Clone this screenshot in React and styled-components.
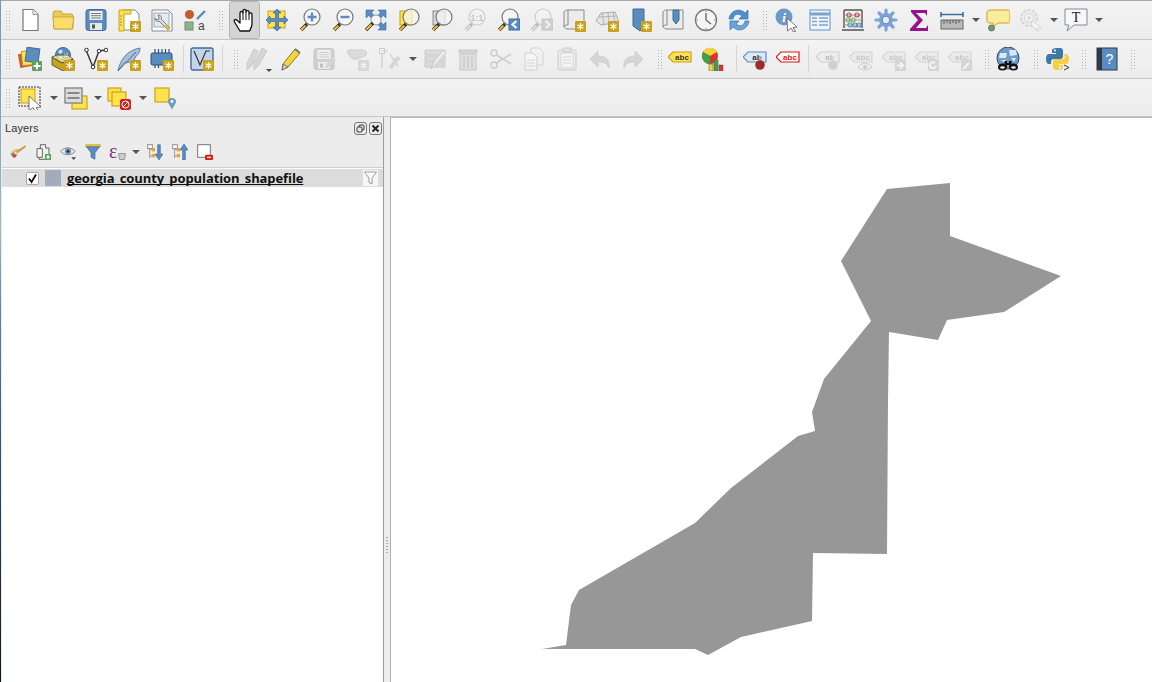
import React from "react";
import styled, { createGlobalStyle } from "styled-components";

const Global = createGlobalStyle`
  html, body { margin: 0; padding: 0; background: #ececec; overflow: hidden; }
  body { font-family: "Liberation Sans", Arial, sans-serif; }
`;

const Window = styled.div`
  width: 1152px;
  height: 682px;
  display: flex;
  flex-direction: column;
  overflow: hidden;
  border-left: 1px solid;
  border-image: linear-gradient(#6f98c4 0%, #7da1c6 15%, #a2b6c8 34%, #5b87b2 45%, #2a4a70 70%, #0c1420 100%) 1;
  box-sizing: border-box;
`;

const Toolbars = styled.div`
  flex: none;
  border-top: 1px solid #a8a8a8;
  background: #f0f0f0;
`;

const Toolbar = styled.div`
  height: ${p => p.$h || 38}px;
  box-sizing: content-box;
  display: flex;
  align-items: center;
  padding-left: 4px;
  border-bottom: 1px solid #c6c6c6;
  background: linear-gradient(#f3f3f3, #ececec);
`;

const Grip = styled.span`
  flex: none;
  width: 6px;
  height: 20px;
  margin-left: ${p => p.$ml || 0}px;
  margin-right: ${p => p.$mr ?? 3}px;
  background-image: radial-gradient(circle, #b4b4b4 0.8px, transparent 1px);
  background-size: 3px 3px;
`;

const Separator = styled.span`
  flex: none;
  width: 1px;
  height: 28px;
  margin-left: ${p => p.$ml || 0}px;
  margin-right: ${p => p.$mr || 0}px;
  background: #d6d6d6;
`;

const Tool = styled.span`
  flex: none;
  width: 33px;
  height: 24px;
  padding-left: 4px;
  box-sizing: border-box;
  display: block;
  ${p => p.$off && "filter: grayscale(1) opacity(0.3);"}
  svg { display: block; }
`;

const ActiveTool = styled(Tool)`
  position: relative;
  z-index: 0;
  &::before {
    content: "";
    position: absolute;
    z-index: -1;
    left: 1px;
    right: 1px;
    top: -7px;
    bottom: -7px;
    background: #d4d4d4;
    border: 1px solid #b4b4b4;
    border-radius: 3px;
    box-sizing: border-box;
  }
`;

const MenuTool = styled.span`
  flex: none;
  position: relative;
  &::after {
    content: "";
    position: absolute;
    left: 24px;
    bottom: -1px;
    border-left: 3px solid transparent;
    border-right: 3px solid transparent;
    border-top: 3px solid #444;
  }
`;

const Caret = styled.span`
  flex: none;
  width: ${p => p.$w || 13}px;
  display: flex;
  justify-content: center;
  &::after {
    content: "";
    border-left: 4px solid transparent;
    border-right: 4px solid transparent;
    border-top: 4px solid #555;
  }
`;

const Body = styled.div`
  flex: 1;
  min-height: 0;
  display: flex;
`;

const Dock = styled.div`
  flex: none;
  width: 382px;
  display: flex;
  flex-direction: column;
  background: #ececec;
  border-right: 1px solid #9e9e9e;
`;

const DockTitle = styled.div`
  height: 22px;
  display: flex;
  align-items: center;
  justify-content: space-between;
  padding: 0 1px 0 4px;
  font-size: 11px;
  letter-spacing: 0.1px;
  color: #333;
`;

const TitleButtons = styled.div`
  display: flex;
  gap: 2px;
`;

const LayerBar = styled.div`
  height: 28px;
  box-sizing: border-box;
  padding: 0 0 2px 4px;
  display: flex;
  align-items: center;
`;

const LayerTool = styled.span`
  flex: none;
  width: 25px;
  display: flex;
  justify-content: center;
  svg { display: block; }
`;

const EpsilonMark = styled.span`
  position: relative;
  width: 17px;
  height: 16px;
  font: 20px/14px "Liberation Serif", serif;
  color: #80307f;
  svg {
    position: absolute;
    right: 0;
    bottom: 0;
  }
`;

const Tree = styled.div`
  flex: 1;
  background: #fff;
  border-top: 1px solid #d0d0d0;
  margin-left: 1px;
  padding-top: 1px;
`;

const LayerRow = styled.div`
  height: 18px;
  display: flex;
  align-items: center;
  background: #dcdcdc;
  padding-left: 24px;
  position: relative;
`;

const Check = styled.span`
  width: 13px;
  height: 13px;
  box-sizing: border-box;
  border: 1px solid #aaa;
  border-radius: 2px;
  background: #fff;
  display: flex;
  align-items: center;
  justify-content: center;
  svg { display: block; }
`;

const Swatch = styled.span`
  width: 16px;
  height: 16px;
  margin-left: 6px;
  background: #a1adbd;
`;

const LayerName = styled.span`
  margin-left: 6px;
  font: bold 13px "Open Sans", sans-serif;
  letter-spacing: -0.09px;
  color: #111;
  text-decoration: underline;
  text-decoration-skip-ink: none;
`;

const FilterMark = styled.span`
  position: absolute;
  right: 5px;
  top: 1px;
  width: 15px;
  height: 16px;
  background: #f6f6f6;
  display: flex;
  align-items: center;
  justify-content: center;
`;

const Splitter = styled.div`
  flex: none;
  width: 6px;
  display: flex;
  align-items: center;
  justify-content: center;
  background: #ececec;
  border-right: 1px solid #b0b0b0;
  &::after {
    content: "";
    width: 2px;
    height: 17px;
    margin-top: 290px;
    background-image: radial-gradient(circle, #aaa 0.8px, transparent 1px);
    background-size: 2px 3px;
  }
`;

const MapCanvas = styled.div`
  flex: 1;
  background: #fff;
  border-top: 1px solid #b8b8b8;
  svg { display: block; }
`;

const GOLD = "#c9a21a";
const BLUE = "#5a8cc0";
const LINE = "#3e6c9c";
const YEL = "#ffe34d";
const SANS = "Liberation Sans, sans-serif";
const SERIF = "Liberation Serif, serif";

const Ic = ({ children, size = 24 }) => (
  <svg width={size} height={size} viewBox="0 0 24 24" fill="none">
    {children}
  </svg>
);

const Badge = () => (
  <g>
    <rect x="13" y="13" width="11" height="11" rx="1" fill={GOLD} />
    <path d="M18.5 15v7M15.5 16.7l6 3.6M21.5 16.7l-6 3.6" stroke="#fff" strokeWidth="1.3" />
  </g>
);

const Glass = ({ children, fill = "#f6f6f6" }) => (
  <>
    <circle cx="14" cy="9" r="8" fill={fill} stroke="#777" strokeWidth="1.2" />
    {children}
    <path d="M3 22l6-6" stroke="#333" strokeWidth="3.4" />
    <path d="M2.8 22.2l4.6-4.6" stroke="#f2c230" strokeWidth="2" />
  </>
);

const Tag = ({ fill = YEL, stroke = GOLD, label = "abc", color = "#333" }) => (
  <>
    <path d="M0 10l5-5h18v10H5z" fill={fill} stroke={stroke} strokeWidth="1.2" />
    <text x="14" y="13" fontSize="8" fontWeight="bold" fontFamily={SANS} textAnchor="middle" fill={color}>
      {label}
    </text>
  </>
);

const NewFile = () => (
  <Ic>
    <path d="M5 1.5h10l5 5v16H5z" fill="#fff" stroke="#777" strokeWidth="1.2" />
    <path d="M15 1.5v5h5" fill="#eee" stroke="#999" />
  </Ic>
);
const OpenFolder = () => (
  <Ic>
    <path d="M2 6l1-3h7l2 3h9l1 2v13H3z" fill="#e8c95a" stroke="#cba83a" />
    <path d="M2 9h21l-2 12H3z" fill="#fbdc6b" stroke="#cba83a" />
  </Ic>
);
const Save = ({ pen }) => (
  <Ic>
    <rect x="2" y="1.5" width="20" height="21" rx="2.5" fill={BLUE} stroke={LINE} />
    <rect x="5.5" y="3" width="13" height="9" fill="#f1f1f1" />
    <path d="M7 5.5h10M7 7.7h10M7 10h10" stroke="#777" />
    <rect x="6" y="15" width="12" height="7" fill="#e8e8e8" />
    <rect x="8" y="16.5" width="3" height="4" fill="#555" />
    {pen && <path d="M13 22l2-6 6-6 3 3-6 6z" fill="#999" />}
  </Ic>
);
const Templates = () => (
  <Ic>
    <path d="M5 2h13l4 4v16H5z" fill="#fff" stroke="#888" />
    <path d="M2 2h12v4H7v17H2z" fill={YEL} stroke={GOLD} />
    <path d="M3 8h2M3 11h2M3 14h2M3 17h2" stroke="#a88" />
    <Badge />
  </Ic>
);
const LayoutManager = () => (
  <Ic>
    <path d="M2 2h16l4 4v17H2z" fill="#fff" stroke="#888" />
    <rect x="4" y="5" width="15" height="14" fill="#e3e9f3" stroke="#9ab" />
    <path d="M8 7c3 0 4 2 3 4l9 9-2 2-9-9c-2 1-4 0-4-3l2 2 2-1v-2z" fill="#ddd" stroke="#666" strokeWidth=".8" />
    <path d="M15 17l4 4" stroke="#e8c030" strokeWidth="2.5" />
  </Ic>
);
const StyleManager = () => (
  <Ic>
    <circle cx="6.5" cy="6.5" r="4.5" fill="#c85a2c" />
    <path d="M14 11l8-8" stroke={BLUE} strokeWidth="2.4" />
    <rect x="2" y="14" width="8" height="8" fill="#8db48f" stroke="#6c8f70" />
    <text x="15" y="22" fontSize="12" fontFamily={SANS} fill="#444">a</text>
  </Ic>
);
const HandIcon = () => (
  <Ic>
    <path
      d="M8 23L2.5 14c-1.2-2 .8-3.2 2.2-2L8 15V5c0-2 2.8-2 3 0V2.8c0-2 3-2 3 0V4c.2-1.8 3-1.8 3 .3V6c.2-1.7 3-1.5 3 .3V16c0 3-1.5 5-2.5 7z"
      fill="#fff"
      stroke="#111"
      strokeWidth="1.3"
      strokeLinejoin="round"
    />
    <path d="M11 5v7M14 4v8M17 6v6" stroke="#111" strokeWidth="1" />
  </Ic>
);
const PanSelect = () => (
  <Ic>
    <rect x="3" y="3" width="17" height="17" fill={YEL} stroke={GOLD} />
    <path
      d="M12 1l4 4h-2.5v5.5H19V8l4 4-4 4v-2.5h-5.5V19H16l-4 4-4-4h2.5v-5.5H5V16l-4-4 4-4v2.5h5.5V5H8z"
      fill={BLUE}
      stroke={LINE}
      strokeWidth=".7"
    />
  </Ic>
);
const ZoomIn = () => (
  <Ic>
    <Glass>
      <path d="M14 4.5v9M9.5 9h9" stroke={BLUE} strokeWidth="2.4" />
    </Glass>
  </Ic>
);
const ZoomOut = () => (
  <Ic>
    <Glass>
      <path d="M9.5 9h9" stroke={BLUE} strokeWidth="2.4" />
    </Glass>
  </Ic>
);
const ZoomFull = () => (
  <Ic>
    <path d="M2 2h20v20H2z" fill="#e9eef4" />
    <path
      d="M2 2h8L7.5 4.5 10.5 8 8 10.5l-3.5-3L2 10zM22 2v8l-2.5-2.5-3.5 3L13.500 8l3-3.5L14 2zM22 22h-8l2.5-2.5-3-3.5 2.5-2.5 3.5 3L22 14z"
      fill={BLUE}
      stroke={LINE}
      strokeWidth=".6"
    />
    <circle cx="12" cy="12" r="5" fill="#f6f6f6" stroke="#999" />
    <path d="M2 22l7-7" stroke="#333" strokeWidth="3.4" />
    <path d="M2.5 21.5l5-5" stroke="#f2c230" strokeWidth="2" />
  </Ic>
);
const ZoomSelection = () => (
  <Ic>
    <rect x="3" y="3" width="12" height="14" fill={YEL} stroke={GOLD} />
    <Glass fill="rgba(245,245,240,.75)" />
  </Ic>
);
const ZoomLayer = () => (
  <Ic>
    <rect x="3" y="3" width="12" height="14" fill="#d8d8d8" stroke="#888" />
    <Glass fill="rgba(245,245,245,.75)" />
  </Ic>
);
const ZoomNative = () => (
  <Ic>
    <Glass>
      <text x="14" y="12.5" fontSize="9" fontWeight="bold" textAnchor="middle" fontFamily={SANS} fill="#555">1:1</text>
    </Glass>
  </Ic>
);
const ZoomLast = ({ next }) => (
  <Ic>
    <Glass />
    <rect x="13" y="11" width="11" height="11" fill={BLUE} stroke={LINE} />
    <path d={next ? "M16.5 13l4 3.5-4 3.5" : "M20.5 13l-4 3.5 4 3.5"} stroke="#fff" strokeWidth="2" />
  </Ic>
);
const Scroll = ({ children }) => (
  <>
    <path d="M6 2h16v19H6c-2 0-4-1-4-3V4c0-1 2-2 4-2z" fill="#ececec" stroke="#888" />
    <path d="M6 2v15c-2 0-4 .5-4 2" stroke="#888" />
    {children}
  </>
);
const NewMapView = () => (
  <Ic>
    <Scroll />
    <Badge />
  </Ic>
);
const New3d = () => (
  <Ic>
    <path d="M6 5l14-1 4 10-18 3-5-4z" fill="#e4e4e4" stroke="#aaa" />
    <path d="M4 9l18-1M7 5l2 12M13 4l1 12M18 4l2 11" stroke="#aaa" strokeWidth=".8" />
    <Badge />
  </Ic>
);
const Bookmark = () => (
  <Ic>
    <path d="M5 1h11v17l-4 5-7-5z" fill={BLUE} stroke={LINE} />
    <Badge />
  </Ic>
);
const ShowBookmarks = () => (
  <Ic>
    <Scroll>
      <path d="M12 2h6v10l-3 4-3-4z" fill={BLUE} stroke={LINE} />
    </Scroll>
  </Ic>
);
const Clock = () => (
  <Ic>
    <circle cx="12" cy="12" r="10.5" fill="#f4f4f4" stroke="#777" strokeWidth="1.3" />
    <path d="M12 5v7l5 4" stroke="#667" strokeWidth="1.4" />
    <path d="M12 2.5V4M12 20v1.5M2.5 12H4M20 12h1.5" stroke={BLUE} />
  </Ic>
);
const Refresh = () => (
  <Ic>
    <path d="M2 11C3 3 12-1 18 5l3-3v9h-9l3-3c-4-3-8-2-9 3z" fill="#4f8fd0" stroke="#3474b0" strokeWidth=".7" />
    <path d="M22 13c-1 8-10 12-16 6l-3 3v-9h9l-3 3c4 3 8 2 9-3z" fill="#6aa4dc" stroke="#3474b0" strokeWidth=".7" />
  </Ic>
);
const Identify = () => (
  <Ic>
    <circle cx="9" cy="9" r="8.5" fill="#6d9ac9" />
    <text x="9" y="14" fontSize="13" fontWeight="bold" fontStyle="italic" textAnchor="middle" fontFamily={SERIF} fill="#fff">i</text>
    <path d="M12 10l10 9-4 .5 2.5 4-2 .5-2.5-4-3.5 3z" fill="#fff" stroke="#555" strokeWidth=".8" />
  </Ic>
);
const AttrTable = () => (
  <Ic>
    <rect x="2" y="2" width="20" height="20" fill="#f0f4fa" stroke="#7aa3cf" strokeWidth="1.2" />
    <path d="M2 6h20" stroke="#7aa3cf" strokeWidth="3" />
    <path d="M4 10h5M11 10h9M4 13.5h5M11 13.5h9M4 17h5M11 17h9" stroke="#7aa3cf" strokeWidth="1.4" />
  </Ic>
);
const Abacus = () => (
  <Ic>
    <path d="M3 2v18M21 2v18M3 2h18M1 22h22" stroke="#555" strokeWidth="1.4" />
    <path d="M3 7h18M3 12h18M3 17h18" stroke="#999" />
    <g fill="none" strokeWidth="1.2">
      <circle cx="8" cy="7" r="2" stroke="#c44" />
      <circle cx="16" cy="7" r="2" stroke="#c44" />
      <circle cx="7" cy="12" r="2" stroke="#6b6" />
      <circle cx="12" cy="12" r="2" stroke="#6b6" />
      <circle cx="9" cy="17" r="2" stroke={BLUE} />
      <circle cx="14" cy="17" r="2" stroke={BLUE} />
      <circle cx="18" cy="17" r="2" stroke={BLUE} />
    </g>
  </Ic>
);
const Gear = () => (
  <Ic>
    <g stroke="#7ba3d6" strokeWidth="3.2" strokeLinecap="round">
      <path d="M12 2v20M2 12h20M5 5l14 14M19 5L5 19" />
    </g>
    <circle cx="12" cy="12" r="7" fill="#7ba3d6" />
    <circle cx="12" cy="12" r="3.8" fill="#e9eef4" stroke={BLUE} />
  </Ic>
);
const Sigma = () => (
  <Ic>
    <path d="M4 2h16v6l-2-3H9l7 7-7 8h10l2-3v6H3v-2l8-9-7-8z" fill="#94148f" />
  </Ic>
);
const Ruler = () => (
  <Ic>
    <path d="M1 4v5M23 4v5M1 6.5h22" stroke={LINE} strokeWidth="1.6" />
    <rect x="1" y="12" width="22" height="9" fill="#b9b9b9" stroke="#666" />
    <path d="M4 12v4M7 12v3M10 12v4M13 12v3M16 12v4M19 12v3" stroke="#555" />
  </Ic>
);
const Balloon = () => (
  <Ic>
    <path d="M4 2h18c1 0 2 1 2 2v9c0 1-1 2-2 2H12l-5 4v-4H4c-2 0-3-1-3-2V4c0-1 2-2 3-2z" fill="#fbed9b" stroke={GOLD} />
    <circle cx="5.5" cy="20" r="3" fill="#6ca060" stroke="#556" strokeWidth=".7" />
  </Ic>
);
const RunFeature = () => (
  <Ic>
    <circle cx="10" cy="10" r="8" fill="#e0e0e0" stroke="#999" strokeWidth="2" strokeDasharray="3 1.5" />
    <circle cx="10" cy="10" r="4.5" fill="#f4f4f4" stroke="#999" />
    <path d="M9 8l3 2-3 2z" fill="#888" />
    <path d="M13 12l9 8-4 .5 1.5 3-7-6z" fill="#fff" stroke="#888" strokeWidth=".8" />
  </Ic>
);
const TextNote = () => (
  <Ic>
    <path d="M1 1h22v16H10l-7 6 2-6H1z" fill="#f4f8f8" stroke="#889" />
    <text x="12" y="13.5" fontSize="14" textAnchor="middle" fontFamily={SERIF} fill="#222">T</text>
  </Ic>
);

const NewLayers = () => (
  <Ic>
    <rect x="1" y="6" width="13" height="14" fill="#c85a2c" transform="rotate(-10 7 13)" />
    <rect x="4" y="4" width="13" height="14" fill={YEL} stroke={GOLD} transform="rotate(-5 10 11)" />
    <rect x="8" y="1" width="13" height="14" fill={BLUE} stroke={LINE} transform="rotate(8 14 8)" />
    <rect x="14" y="14" width="10" height="10" rx="1" fill="#5fa05f" />
    <path d="M19 15.5v7M15.5 19h7" stroke="#fff" strokeWidth="2" />
  </Ic>
);
const NewGeoPackage = () => (
  <Ic>
    <circle cx="12" cy="8" r="7.5" fill={BLUE} stroke={LINE} />
    <path d="M7 4l3-1.5 2 2-3 3zM13 7l4-.5v3l-4 1zM8 9h3v3H8z" fill="#cfe0f0" />
    <path d="M1 10l10 6 11-4v8l-10 4-11-6z" fill={GOLD} stroke="#444" strokeWidth=".8" />
    <path d="M1 10l5-2h11l5 4-11 4z" fill="#ffee88" fillOpacity=".7" stroke="#444" strokeWidth=".8" />
    <Badge />
  </Ic>
);
const NewVertex = () => (
  <Ic>
    <path d="M2 3l7 17 6-16 7-1" stroke="#333" strokeWidth="1.4" />
    <circle cx="2.5" cy="3" r="1.8" fill="#fff" stroke="#333" />
    <circle cx="15" cy="4" r="1.8" fill="#fff" stroke="#333" />
    <circle cx="22" cy="3" r="1.8" fill="#fff" stroke="#333" />
    <circle cx="9" cy="20" r="1.8" fill="#fff" stroke="#333" />
    <Badge />
  </Ic>
);
const Feather = () => (
  <Ic>
    <path d="M1 24C3 13 10 3 23 1c0 4-2 7-4 8l-2 4c-3 2-7 3-10 3z" fill="#a9c0da" stroke="#5d82ab" />
    <path d="M1 24L19 5" stroke="#4a6b90" />
    <Badge />
  </Ic>
);
const Chip = () => (
  <Ic>
    <path d="M5 2v4M8.5 2v4M12 2v4M15.5 2v4M19 2v4M5 18v3M8.5 18v3" stroke="#2c4f76" strokeWidth="1.2" />
    <rect x="1" y="6" width="21" height="12" rx="1.5" fill={BLUE} stroke="#2c4f76" />
    <Badge />
  </Ic>
);
const VirtualTile = () => (
  <Ic>
    <rect x="1" y="1" width="22" height="22" rx="2" fill="#c5d5e8" stroke={LINE} strokeWidth="1.4" />
    <path d="M4 4l6 14 6-14h4" stroke="#333" strokeWidth="1.2" />
    <Badge />
  </Ic>
);
const Pencils = () => (
  <Ic>
    <path d="M1 23v-7L8 2l4 2-6 14zM8 23v-7L16 1l5 3-8 14z" fill="#999" stroke="#777" />
  </Ic>
);
const Pencil = () => (
  <Ic>
    <path d="M3 23l1-6L16 2l5 4L9 20z" fill="#f2d53c" stroke="#8b7a20" />
    <path d="M3 23l1-6 5 3z" fill="#ccc" stroke="#555" strokeWidth=".7" />
    <path d="M16 2l5 4" stroke="#777" strokeWidth="2" />
  </Ic>
);
const VectorAdd = () => (
  <Ic>
    <path d="M2 4c4-3 7 0 12-1 6-1 9 2 7 5-2 2-5 2-9 4-4 1-6-1-8-4z" fill="#aaa" stroke="#777" />
    <Badge />
  </Ic>
);
const Move = () => (
  <Ic>
    <path d="M4 4h6M4 7v14M12 7l8 12" stroke="#777" strokeWidth="1.2" />
    <rect x="1.5" y="1.5" width="5" height="5" stroke="#777" />
    <path d="M11 20l6-9 3-2 3 3-3 2-6 8z" fill="#999" />
  </Ic>
);
const Records = () => (
  <Ic>
    <path d="M2 3h20v5H2zM2 9h20v5H2zM2 15h20v5H2z" fill="#aaa" stroke="#777" />
    <path d="M8 22l3-8 9-11 3 3-10 12z" fill="#ddd" stroke="#777" />
  </Ic>
);
const Trash = () => (
  <Ic>
    <path d="M3 3h18v3H3z" fill="#999" stroke="#666" />
    <path d="M4 7h16v16H4z" fill="#bbb" stroke="#666" />
    <path d="M8 9v12M12 9v12M16 9v12" stroke="#777" strokeWidth="1.5" />
  </Ic>
);
const Scissors = () => (
  <Ic>
    <circle cx="5" cy="6" r="3" stroke="#777" strokeWidth="1.4" />
    <circle cx="5" cy="18" r="3" stroke="#777" strokeWidth="1.4" />
    <path d="M7.5 8L22 17M7.5 16L22 7" stroke="#777" strokeWidth="1.5" />
  </Ic>
);
const Copy = () => (
  <Ic>
    <path d="M9 1h8l4 4v13H9z" fill="#f0f0f0" stroke="#888" />
    <path d="M3 6h8l4 4v13H3z" fill="#fff" stroke="#888" />
    <path d="M5 13h8M5 16h8M5 19h8" stroke="#999" />
  </Ic>
);
const Paste = () => (
  <Ic>
    <rect x="3" y="3" width="18" height="20" rx="1" fill="#e0e0e0" stroke="#777" />
    <rect x="6" y="6" width="12" height="15" fill="#fff" stroke="#999" />
    <rect x="8" y="1" width="8" height="4" fill="#bbb" stroke="#777" />
    <path d="M8 10h8M8 13h8M8 16h8" stroke="#999" />
  </Ic>
);
const Undo = ({ redo }) => (
  <Ic>
    <g transform={redo ? "matrix(-1 0 0 1 24 0)" : undefined}>
      <path d="M10 4v5c7 0 12 3 11 12-2-5-5-6-11-6v5l-8-8z" fill="#999" stroke="#888" />
    </g>
  </Ic>
);
const LabelTag = () => (
  <Ic>
    <Tag />
  </Ic>
);
const Diagram = () => (
  <Ic>
    <circle cx="9" cy="9" r="8" fill="#d8362c" />
    <path d="M9 9L2 5a8 8 0 0114 0z" fill="#f2d53c" />
    <path d="M9 9L2 5a8 8 0 007 12z" fill="#43a047" />
    <rect x="8" y="17" width="4" height="7" fill="#f2d53c" stroke="#555" strokeWidth=".5" />
    <rect x="13" y="13" width="4" height="11" fill="#43a047" stroke="#555" strokeWidth=".5" />
    <rect x="18" y="18" width="4" height="6" fill="#d8362c" stroke="#555" strokeWidth=".5" />
  </Ic>
);
const LabelPin = ({ red }) => (
  <Ic>
    <Tag fill="#dfe8f4" stroke={BLUE} label="ab" />
    <path d="M17 9v6" stroke="#aaa" strokeWidth="2" />
    <circle cx="17" cy="18" r="4.8" fill={red ? "#a12a2a" : "#888"} />
  </Ic>
);
const LabelRed = () => (
  <Ic>
    <Tag fill="#fff" stroke="#e01414" color="#e01414" />
  </Ic>
);
const LabelEye = () => (
  <Ic>
    <Tag fill="#ddd" stroke="#999" color="#666" />
    <path d="M9 20c4-5 9-5 14 0-5 4-10 4-14 0z" fill="#eee" stroke="#777" />
    <circle cx="16" cy="20" r="2" fill="#777" />
  </Ic>
);
const LabelBox = ({ d }) => (
  <Ic>
    <Tag fill="#ddd" stroke="#999" color="#666" />
    <rect x="13" y="13" width="11" height="11" fill="#999" />
    <path d={d} stroke="#fff" strokeWidth="2" />
  </Ic>
);
const GlobeBinoculars = () => (
  <Ic>
    <circle cx="12" cy="11" r="11" fill="#6f9bc9" stroke="#2c4f76" />
    <path d="M4 6h7l-1 5H3zM13 3h7l1 5-7 1zM5 13h5l-1 3zM15 11h5l-2 4z" fill="#dde7f2" />
    <path d="M8.5 14H11v4H8.5zM13 14h2.5v4H13zM10 16h4v2h-4z" fill="#111" />
    <ellipse cx="6.5" cy="20" rx="4.5" ry="3.5" fill="#111" />
    <ellipse cx="17.5" cy="20" rx="4.5" ry="3.5" fill="#111" />
    <ellipse cx="6.5" cy="20.5" rx="2.4" ry="1.3" fill="#eee" />
    <ellipse cx="17.5" cy="20.5" rx="2.4" ry="1.3" fill="#eee" />
  </Ic>
);
const Python = () => (
  <Ic>
    <path d="M10 1h4c2 0 3 1 3 3v5c0 2-1 3-3 3H8c-2 0-3 1-3 3v2H3c-2 0-3-2-3-5s1-5 3-5h7V6H6V3c0-1 2-2 4-2z" fill="#3d78a8" />
    <circle cx="9" cy="3.5" r="1" fill="#fff" />
    <path d="M17 7h3c2 0 3 2 3 5s-1 5-3 5h-7v1h4v3c0 1-2 2-4 2h-3c-2 0-3-1-3-3v-5c0-2 1-3 3-3h6c2 0 3-1 3-3z" fill="#f5cf45" />
    <circle cx="14" cy="20.5" r="1" fill="#fff" />
    <path d="M18 18l5 2.5-5 2.5" stroke="#333" />
  </Ic>
);
const HelpBook = () => (
  <Ic>
    <rect x="2" y="1" width="20" height="22" fill={BLUE} stroke="#2d3a48" />
    <rect x="2" y="1" width="5" height="22" fill="#2d3a48" />
    <text x="14.5" y="17" fontSize="14" textAnchor="middle" fontFamily={SANS} fill="#fff">?</text>
  </Ic>
);

const SelectFeatures = () => (
  <Ic>
    <rect x="1" y="1" width="21" height="19" stroke="#333" strokeDasharray="2 1" />
    <rect x="3" y="3" width="14" height="14" fill={YEL} stroke={GOLD} />
    <path d="M11 10l12 11-5 .5 2 3-3 .5-2-3.5-4 3z" fill="#fff" stroke="#555" strokeWidth=".8" />
  </Ic>
);
const SelectAttr = () => (
  <Ic>
    <rect x="8" y="10" width="15" height="13" fill={YEL} stroke={GOLD} strokeWidth="1.2" />
    <rect x="1" y="2" width="17" height="15" fill="#ddd" stroke="#888" strokeWidth="1.4" />
    <path d="M3.5 7h12M3.5 12h12" stroke="#888" strokeWidth="2" />
  </Ic>
);
const Deselect = () => (
  <Ic>
    <rect x="1" y="2" width="13" height="13" fill={YEL} stroke={GOLD} strokeWidth="1.2" />
    <rect x="5" y="6" width="14" height="14" fill={YEL} stroke={GOLD} strokeWidth="1.2" />
    <rect x="13" y="13" width="11" height="11" rx="2" fill="#d62020" />
    <circle cx="18.5" cy="18.5" r="3.5" stroke="#fff" />
    <path d="M16 21l5-5" stroke="#fff" />
  </Ic>
);
const SelectPin = () => (
  <Ic>
    <rect x="2" y="2" width="14" height="14" fill={YEL} stroke={GOLD} strokeWidth="1.2" />
    <path d="M19 12c-3 0-4 2-4 3 0 3 4 7 4 9 0-2 4-6 4-9 0-1-1-3-4-3z" fill="#6f9cb8" />
    <circle cx="19" cy="15.5" r="1.4" fill="#fff" />
  </Ic>
);

const Brush = () => (
  <Ic size={16}>
    <path d="M1 12l6-4 3 3-5 4z" fill="#f2d040" />
    <path d="M0 15l5-3 3 3-4 3z" fill="#6f9bd0" />
    <path d="M2 18l4-3 5 1-4 5z" fill="#d8403a" />
    <path d="M7 9l5-2 2 4-3 4z" fill="#d8a860" />
    <path d="M12 9l11-7 1 2-10 8z" fill="#c8964a" />
  </Ic>
);
const AddGroup = () => (
  <Ic size={16}>
    <path d="M8 1h8v5h5v17H6V7h2z" fill="#eee" stroke="#666" strokeWidth="1.5" />
    <path d="M3 7h8v13H3z" fill="#f6f6f6" stroke="#666" strokeWidth="1.5" />
    <rect x="15" y="15" width="9" height="9" fill="#5fa05f" />
    <path d="M19.5 16.5v6M16.5 19.5h6" stroke="#fff" strokeWidth="1.8" />
  </Ic>
);
const Eye = () => (
  <Ic size={16}>
    <path d="M1 11c5-7 15-7 22 0-6 7-17 7-22 0z" fill="#e6e6e6" stroke="#888" strokeWidth="1.5" />
    <circle cx="12" cy="11" r="4.5" fill={BLUE} />
    <circle cx="12" cy="11" r="1.8" fill="#222" />
    <path d="M17 20h7l-3.5 4z" fill="#444" />
  </Ic>
);
const Funnel = () => (
  <Ic size={16}>
    <path d="M1 1h22v3H1z" fill="#f2cf3a" stroke={GOLD} />
    <path d="M2 4h20l-7 9v10l-6-3v-7z" fill={BLUE} stroke={LINE} />
  </Ic>
);
const Epsilon = () => (
  <EpsilonMark>
    ε
    <svg width="8" height="7" viewBox="0 0 8 7" fill="none">
      <path d="M.5 .5h7l-1 6h-5z" fill="#ccc" stroke="#999" />
    </svg>
  </EpsilonMark>
);
const TreeArrow = ({ up }) => (
  <Ic size={16}>
    <path d="M4 3v18M4 8h7M4 18h7" stroke="#888" strokeWidth="1.2" />
    <rect x="1" y="1" width="7" height="6" fill="#fff" stroke="#888" strokeWidth="1.4" />
    <rect x="7" y="6" width="5" height="5" fill="#f2a030" />
    <rect x="7" y="15" width="5" height="5" fill="#f2a030" />
    <path d={up ? "M18 0l6 9h-4v15h-4V9h-4z" : "M16 1h4v14h4l-6 9-6-9h4z"} fill={BLUE} stroke="#2c5f95" strokeWidth=".8" />
  </Ic>
);
const RemoveLayer = () => (
  <Ic size={16}>
    <rect x="1" y="1" width="19" height="19" fill="#fff" stroke="#777" strokeWidth="1.5" />
    <rect x="12" y="16" width="12" height="8" rx="1.5" fill="#d62020" />
    <path d="M15 20h6" stroke="#fff" strokeWidth="1.8" />
  </Ic>
);

const Float = () => (
  <svg width="13" height="13" viewBox="0 0 13 13" fill="none" stroke="#333">
    <rect x=".5" y=".5" width="12" height="12" rx="2.5" stroke="#777" />
    <rect x="5" y="3" width="5" height="5" rx="1" />
    <rect x="3" y="5" width="5" height="5" rx="1" fill="#ececec" />
  </svg>
);
const Close = () => (
  <svg width="13" height="13" viewBox="0 0 13 13" fill="none">
    <rect x=".5" y=".5" width="12" height="12" rx="2.5" stroke="#777" />
    <path d="M3.5 3.5l6 6M9.5 3.5l-6 6" stroke="#222" strokeWidth="2" />
  </svg>
);

const App = () => (
  <Window>
    <Global />
    <Toolbars>
      <Toolbar>
        <Grip />
        <Tool><NewFile /></Tool>
        <Tool><OpenFolder /></Tool>
        <Tool><Save /></Tool>
        <Tool><Templates /></Tool>
        <Tool><LayoutManager /></Tool>
        <Tool><StyleManager /></Tool>
        <Grip $ml={6} $mr={4} />
        <ActiveTool><HandIcon /></ActiveTool>
        <Tool><PanSelect /></Tool>
        <Tool><ZoomIn /></Tool>
        <Tool><ZoomOut /></Tool>
        <Tool><ZoomFull /></Tool>
        <Tool><ZoomSelection /></Tool>
        <Tool><ZoomLayer /></Tool>
        <Tool $off><ZoomNative /></Tool>
        <Tool><ZoomLast /></Tool>
        <Tool $off><ZoomLast next /></Tool>
        <Tool><NewMapView /></Tool>
        <Tool><New3d /></Tool>
        <Tool><Bookmark /></Tool>
        <Tool><ShowBookmarks /></Tool>
        <Tool><Clock /></Tool>
        <Tool><Refresh /></Tool>
        <Grip $ml={6} />
        <Tool><Identify /></Tool>
        <Tool><AttrTable /></Tool>
        <Tool><Abacus /></Tool>
        <Tool><Gear /></Tool>
        <Tool><Sigma /></Tool>
        <Tool><Ruler /></Tool>
        <Caret />
        <Tool><Balloon /></Tool>
        <Tool $off><RunFeature /></Tool>
        <Caret $w={12} />
        <Tool><TextNote /></Tool>
        <Caret $w={12} />
      </Toolbar>
      <Toolbar>
        <Grip />
        <Tool><NewLayers /></Tool>
        <Tool><NewGeoPackage /></Tool>
        <Tool><NewVertex /></Tool>
        <Tool><Feather /></Tool>
        <Tool><Chip /></Tool>
        <Separator $ml={4} $mr={2} />
        <Tool><VirtualTile /></Tool>
        <Separator $ml={3} />
        <Grip $ml={10} />
        <MenuTool><Tool $off><Pencils /></Tool></MenuTool>
        <Tool><Pencil /></Tool>
        <Tool $off><Save pen /></Tool>
        <Tool $off><VectorAdd /></Tool>
        <Tool $off><Move /></Tool>
        <Caret $w={12} />
        <Tool $off><Records /></Tool>
        <Tool $off><Trash /></Tool>
        <Tool $off><Scissors /></Tool>
        <Tool $off><Copy /></Tool>
        <Tool $off><Paste /></Tool>
        <Tool $off><Undo /></Tool>
        <Tool $off><Undo redo /></Tool>
        <Grip $ml={7} $mr={1} />
        <Tool><LabelTag /></Tool>
        <Tool><Diagram /></Tool>
        <Separator $ml={6} $mr={2} />
        <Tool><LabelPin red /></Tool>
        <Tool><LabelRed /></Tool>
        <Separator $ml={3} $mr={3} />
        <Tool $off><LabelPin /></Tool>
        <Tool $off><LabelEye /></Tool>
        <Tool $off><LabelBox d="M15 18.5h5M18 15.5l3 3-3 3" /></Tool>
        <Tool $off><LabelBox d="M21 18.5a3 3 0 11-1-2.5" /></Tool>
        <Tool $off><LabelBox d="M15 22l6-6" /></Tool>
        <Grip $ml={7} $mr={2} />
        <Tool><GlobeBinoculars /></Tool>
        <Grip $ml={8} />
        <Tool><Python /></Tool>
        <Grip $ml={6} $mr={4} />
        <Tool><HelpBook /></Tool>
        <Grip $ml={6} />
      </Toolbar>
      <Toolbar $h={37}>
        <Grip />
        <Tool><SelectFeatures /></Tool>
        <Caret />
        <Tool><SelectAttr /></Tool>
        <Caret $w={10} />
        <Tool><Deselect /></Tool>
        <Caret />
        <Tool><SelectPin /></Tool>
      </Toolbar>
    </Toolbars>
    <Body>
      <Dock>
        <DockTitle>
          Layers
          <TitleButtons>
            <Float />
            <Close />
          </TitleButtons>
        </DockTitle>
        <LayerBar>
          <LayerTool><Brush /></LayerTool>
          <LayerTool><AddGroup /></LayerTool>
          <LayerTool><Eye /></LayerTool>
          <LayerTool><Funnel /></LayerTool>
          <LayerTool><Epsilon /></LayerTool>
          <Caret $w={12} />
          <LayerTool><TreeArrow /></LayerTool>
          <LayerTool><TreeArrow up /></LayerTool>
          <LayerTool><RemoveLayer /></LayerTool>
        </LayerBar>
        <Tree>
          <LayerRow>
            <Check>
              <svg width="11" height="11" viewBox="0 0 11 11" fill="none">
                <path d="M2 5.5L4.5 9 9 1.5" stroke="#111" strokeWidth="1.8" />
              </svg>
            </Check>
            <Swatch />
            <LayerName>georgia_county_population_shapefile</LayerName>
            <FilterMark>
              <svg width="13" height="14" viewBox="0 0 13 14" fill="none">
                <path d="M.5 1h12L8 7v6L5 11.5V7z" fill="#fff" stroke="#999" />
              </svg>
            </FilterMark>
          </LayerRow>
        </Tree>
      </Dock>
      <Splitter />
      <MapCanvas>
        <svg width="761" height="564" viewBox="391 118 761 564">
          <path
            d="M887 189L950 183V236L1061 276L1004 312L947 320L938 340L889 332L888 400L887 554L813 553L812 621L741 637L708 655L695 649L542 649L566 645L571 605L579 590L695 523L731 488L798 436L815 431L812 412L824 379L871 321L841 261Z"
            fill="#979797"
          />
        </svg>
      </MapCanvas>
    </Body>
  </Window>
);

export default App;
